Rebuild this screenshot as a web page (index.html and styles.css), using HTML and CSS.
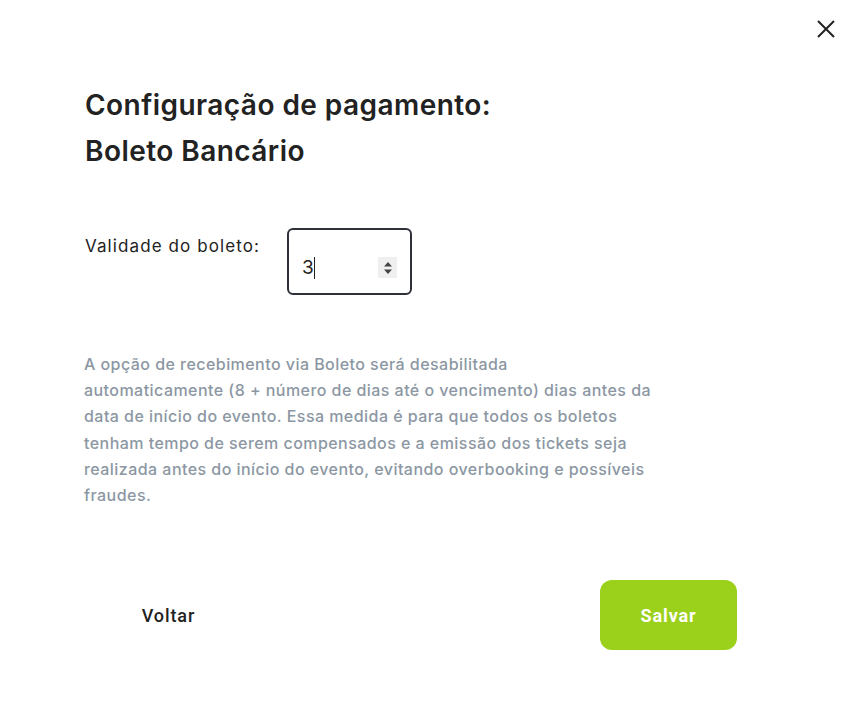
FILE: index.html
```html
<!DOCTYPE html>
<html lang="pt-BR">
<head>
<meta charset="utf-8">
<link rel="stylesheet" href="styles.css">
</head>
<body>
<div class="modal">
  <button class="close" aria-label="Fechar">
    <svg width="18" height="18" viewBox="0 0 18 18"><path d="M1 1L17 17M17 1L1 17" stroke="#222" stroke-width="2" fill="none"/></svg>
  </button>
  <h1 class="title">Configuração de pagamento:<br>Boleto Bancário</h1>
  <div class="field">
    <label class="label">Validade do boleto:</label>
    <div class="input">
      <span class="value">3</span><span class="caret"></span>
      <span class="spin">
        <svg width="10" height="14" viewBox="0 0 10 14"><path d="M5 1L9 5.5H1Z M5 13L9 8.5H1Z" fill="#444"/></svg>
      </span>
    </div>
  </div>
  <p class="info">A opção de recebimento via Boleto será desabilitada<br>automaticamente (8 + número de dias até o vencimento) dias antes da<br>data de início do evento. Essa medida é para que todos os boletos<br>tenham tempo de serem compensados e a emissão dos tickets seja<br>realizada antes do início do evento, evitando overbooking e possíveis<br>fraudes.</p>
  <div class="actions">
    <button class="btn back">Voltar</button>
    <button class="btn save">Salvar</button>
  </div>
</div>
</body>
</html>
```
FILE: styles.css
```css
* { box-sizing: border-box; }
html, body { margin: 0; background: #fff; }
body { font-family: "Inter", "Noto Sans", sans-serif; color: #222; }
.modal { position: relative; width: 853px; height: 727px; padding: 82px 0 0 85px; }
.close { position: absolute; top: 20px; right: 18px; background: none; border: 0; padding: 0; width: 18px; height: 18px; cursor: pointer; }
.close svg { display: block; }
.title { margin: 0; font-size: 28px; font-weight: 600; line-height: 46px; color: #222; letter-spacing: 0.45px; }
.field { display: flex; align-items: flex-start; margin-top: 54px; }
.label { font-size: 17px; line-height: 24px; padding-top: 6px; width: 202px; color: #222; letter-spacing: 1.1px; }
.input { width: 125px; height: 67px; border: 2px solid #2e313a; border-radius: 6px; display: flex; align-items: center; padding: 12px 13px 0 13px; position: relative; }
.value { font-size: 19px; color: #222; line-height: 22px; }
.caret { width: 1px; height: 22px; background: #222; }
.spin { margin-left: auto; width: 19px; height: 21px; background: #efefef; display: flex; align-items: center; justify-content: center; }
.spin svg { display: block; }
.info { margin: 56px 0 0 -1px; width: 620px; font-size: 16px; line-height: 26.2px; color: #8c97a3; font-weight: 500; white-space: nowrap; letter-spacing: 0.45px; }
.actions { display: flex; justify-content: space-between; width: 637px; margin-top: 72px; margin-left: 15px; }
.btn { font-family: "Roboto", "Liberation Sans", sans-serif; font-weight: 700; font-size: 18px; border: 0; width: 137px; height: 70px; border-radius: 12px; cursor: pointer; letter-spacing: 0.9px; }
.back { background: transparent; color: #222; font-weight: 500; }
.save { background: #9bd01b; color: #fff; }
```
